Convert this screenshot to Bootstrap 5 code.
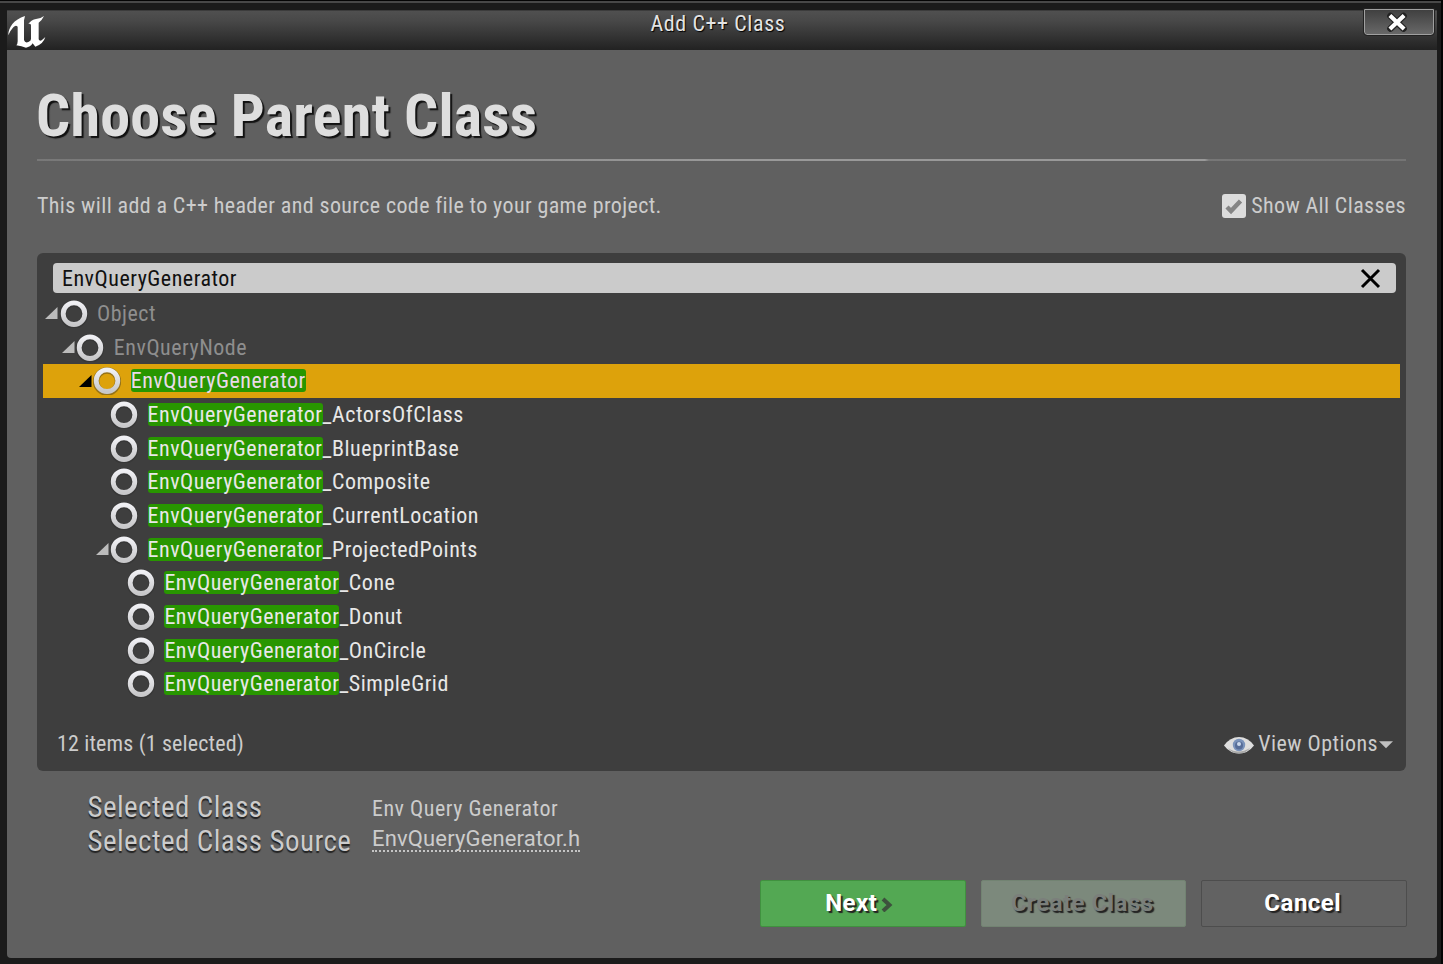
<!DOCTYPE html>
<html lang="en">
<head>
<meta charset="utf-8">
<meta name="viewport" content="width=device-width, initial-scale=1">
<title>Add C++ Class</title>
<link href="https://cdn.jsdelivr.net/npm/bootstrap@5.3.0/dist/css/bootstrap.min.css" rel="stylesheet">
<style>
body{font-family:Roboto,"Liberation Sans",sans-serif;font-stretch:75%;font-size:22px;letter-spacing:.51px;line-height:26px;color:#ccc;background:#1b1b1b}
.window{height:964px;border-top:1px solid #050505;border-right:2px solid #050505;background:#1b1b1b;padding:0 4px 6px 7px;box-shadow:inset 0 2px #484848}
.titlebar{height:40px;margin-top:9px;background:linear-gradient(#505050,#484848 25%,#222);border-top:1px solid #3c3c3c;display:grid;grid-template-columns:1fr auto 1fr}
.app-logo{width:40px;height:35px;margin-top:3px}
.window-title{color:#e4e4e4;text-shadow:1px 1px 1px #000;letter-spacing:.6px;padding-right:8px}
.btn-x{width:70px;height:26px;border:1px solid #a0a0a0;border-radius:0 0 3px 3px;background:linear-gradient(#404040,#686868);outline:1px solid #222;margin-right:3px;margin-top:-2px}
.content-area{background:#606060;padding:0 31px 0 30px;height:908px;border-radius:0 0 4px 4px}
.heading-xl{font-size:60px;line-height:70px;font-weight:700;letter-spacing:.22px;color:#dedede;text-shadow:2px 2px 1px #111;padding-top:31px;height:109px;text-indent:-1px}
.rule{height:2px;background:linear-gradient(90deg,#787878,#999 50%,#999 85.3%,#777 85.6%,#747474)}
.intro{margin-top:32px;letter-spacing:.38px}
.check{width:24px;height:24px;border-radius:3px;background:#dcdcdc;margin-right:5px}
.panel{margin-top:34px;height:518px;border-radius:6px;background:#3e3e3e;padding:10px 6px 0}
.search{height:30px;margin:0 4px 0 10px;padding:1px 15px 0 9px;border-radius:4px;background:#cbcbcb;color:#111}
.tree{margin:4px 0 0;padding:0}
.tree-row{height:33.68px;padding-left:calc(2px + var(--level)*16.85px)}
.tree-row.selected{background:#dda20b;color:#eadbe9}
.ring{width:28px;height:28px;margin-left:1.5px;margin-right:9.5px}
.arrow{width:13px;height:13px;fill:#bcbcbc}
.selected .arrow{fill:#000}
.hit{background:#289600;border-radius:3px;line-height:23px;display:inline-block}
.tree-text{color:#e8e8e8}
.dim{color:#8e8e8e}
.tree-foot{margin-top:30px;padding:0 7px 0 14px}
.item-count{letter-spacing:.15px}
.options-text{letter-spacing:.45px}
.options-arrow{margin-left:1px}
.field-name{font-size:29px;line-height:33.5px;letter-spacing:.43px;width:284px;text-indent:-.5px;text-shadow:0 2px 1px #222}
.source-link{color:#ccc;text-decoration:none;border-bottom:2px dotted #c4c4c4;line-height:22px;display:inline-block;font-stretch:100%;letter-spacing:.15px}
.action{width:205.5px;height:47px;border-radius:2px;font-stretch:100%;font-weight:700;font-size:24px;line-height:45px;letter-spacing:.5px;color:#fff;text-shadow:2px 2px 1px #222;padding:0 2px 0 0}
.next{background:#53a853;border:1px solid #40913f;padding-right:6px}
.create{background:#7c897c;border:1px solid #728372;color:#7b7f7b}
.cancel{background:#626262;border:1px solid #4d4d4d}
.details{padding:20px 0 0 51px;height:109px}
.values{padding-top:5px}
.value-name{height:30px}
.actions{gap:15px;margin-right:-.5px}
</style>
</head>
<body class="overflow-hidden">
<svg class="position-absolute" width="0" height="0">
  <defs><linearGradient id="ringFill" x1="0" y1="0" x2="0" y2="1"><stop offset="0" stop-color="#f0f0f4"/><stop offset="1" stop-color="#c8c8ca"/></linearGradient></defs>
</svg>
<main class="window">
  <header class="titlebar">
    <svg class="app-logo" viewBox="20 38 120 105"><path fill="#fff" d="M24 102C24 78 40 55 74 44L71 57V116Q74 126 84 122Q92 119 92 113V71Q90 65 84 68Q94 54 107 53Q122 51 131 44Q125 57 115 64V114Q118 121 124 117L135 107Q129 128 105 136L97 126Q90 137 77 139Q64 135 48 132Q52 128 52 120V76Q46 70 39 78Q31 86 24 102Z"/></svg>
    <div class="window-title">Add C++ Class</div>
    <button class="btn-x p-0 ms-auto d-flex justify-content-center" aria-label="Close"><svg width="24" height="24" viewBox="0 0 22 22" style="margin-right:4px"><path d="M5 5.500L17 17M17 5.500L5 17" stroke="#222" stroke-width="6" stroke-linecap="round"/><path d="M4.500 5L17.500 17.500M17.500 5L4.500 17.500" stroke="#fff" stroke-width="3.800"/></svg></button>
  </header>
  <section class="content-area">
    <h1 class="heading-xl m-0">Choose Parent Class</h1>
    <div class="rule"></div>
    <div class="intro d-flex justify-content-between">
      <div>This will add a C++ header and source code file to your game project.</div>
      <label class="d-flex align-items-center"><svg class="check" viewBox="0 0 24 24"><path d="M5 13l4 4L18.500 7" fill="none" stroke="#858585" stroke-width="4.500"/></svg><span>Show All Classes</span></label>
    </div>
    <div class="panel">
      <div class="search d-flex align-items-center justify-content-between"><span>EnvQueryGenerator</span><svg width="21" height="21" viewBox="0 0 21 21"><path d="M2 2L19 19M19 2L2 19" stroke="#000" stroke-width="3"/></svg></div>
      <ul class="tree list-unstyled" id="tree"></ul>
      <div class="tree-foot d-flex justify-content-between">
        <span class="item-count">12 items (1 selected)</span>
        <span class="d-flex align-items-center">
          <svg width="30" height="20" viewBox="0 0 30 20" class="me-1"><path d="M0 11.500Q6 3 15 3Q24 3 30 11.500Q24 19.500 15 19.500Q6 19.500 0 11.500Z" fill="#dedede"/><path d="M4 14Q14 21 26 14Q22 19.500 15 19.500Q8 19.500 4 14Z" fill="#a9a9a9"/><circle cx="15" cy="11" r="6.200" fill="#7a93bb"/><circle cx="15" cy="11.500" r="4" fill="#566d99"/><circle cx="15" cy="10" r="2" fill="#cbd8ec"/></svg>
          <span class="options-text">View Options</span><svg class="options-arrow" width="14" height="9" viewBox="0 0 15 9"><path d="M0 1H15L7.500 8.500Z" fill="#c0c0c0"/></svg>
        </span>
      </div>
    </div>
    <div class="d-flex details">
      <div><div class="field-name">Selected Class</div><div class="field-name">Selected Class Source</div></div>
      <div class="values"><div class="value-name">Env Query Generator</div><a class="source-link">EnvQueryGenerator.h</a></div>
    </div>
    <div class="actions d-flex justify-content-end">
      <button class="action next">Next<svg class="ms-1" width="13" height="15" viewBox="0 0 13 15"><path d="M2 2L8.500 8L2 14" fill="none" stroke="#3d513d" stroke-width="4"/></svg></button>
      <button class="action create">Create Class</button>
      <button class="action cancel">Cancel</button>
    </div>
  </section>
</main>
<script>
const rows = [
  [0, 1, "", "Object"], [1, 1, "", "EnvQueryNode"], [2, 1, "EnvQueryGenerator", ""],
  [3, 0, "EnvQueryGenerator", "_ActorsOfClass"], [3, 0, "EnvQueryGenerator", "_BlueprintBase"],
  [3, 0, "EnvQueryGenerator", "_Composite"], [3, 0, "EnvQueryGenerator", "_CurrentLocation"],
  [3, 1, "EnvQueryGenerator", "_ProjectedPoints"], [4, 0, "EnvQueryGenerator", "_Cone"],
  [4, 0, "EnvQueryGenerator", "_Donut"], [4, 0, "EnvQueryGenerator", "_OnCircle"], [4, 0, "EnvQueryGenerator", "_SimpleGrid"]
];
document.getElementById("tree").innerHTML = rows.map(([level, open, hit, rest], i) => `
  <li class="tree-row d-flex align-items-center ${i === 2 ? "selected" : ""}" style="--level:${level}">
    <svg class="arrow" viewBox="0 0 13 13">${open ? '<path d="M12.500 0V12H0Z"/>' : ""}</svg>
    <svg class="ring" viewBox="0 0 28 28"><circle cx="14" cy="14.500" r="11" fill="none" stroke="#2c2c2c" stroke-opacity=".4" stroke-width="6.500"/><circle cx="14" cy="13.700" r="10.800" fill="none" stroke="url(#ringFill)" stroke-width="4.800"/></svg>
    <span class="${i < 2 ? "dim" : i === 2 ? "" : "tree-text"}">${hit ? `<span class="hit">${hit}</span>` : ""}${rest}</span>
  </li>`).join("");
</script>
<script src="https://cdn.jsdelivr.net/npm/bootstrap@5.3.0/dist/js/bootstrap.bundle.min.js"></script>
</body>
</html>
